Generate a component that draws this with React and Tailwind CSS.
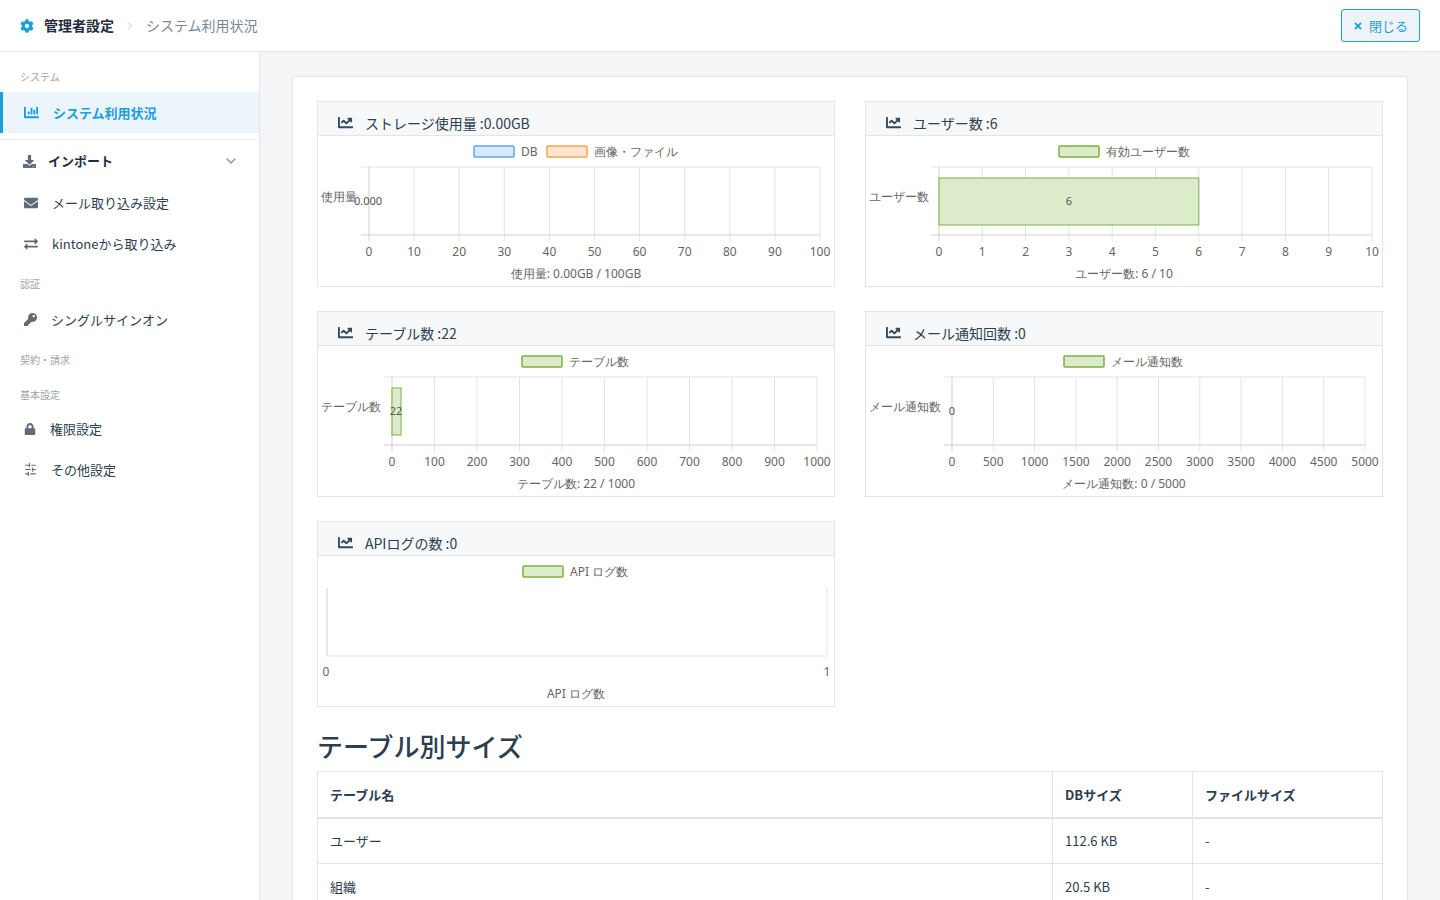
import React from 'react'
import { FaCog, FaChartBar, FaDownload, FaEnvelope, FaExchangeAlt, FaKey, FaLock, FaTimes, FaChartLine } from 'react-icons/fa'
import { FiChevronDown, FiChevronRight, FiSliders } from 'react-icons/fi'

const font = { fontFamily: '"Noto Sans CJK JP", "Noto Sans", sans-serif' }

const Chart = ({ left, right, top = 31, bottom = 99, ticks, legend, ylabel, bar, barLabel, title }) => {
  const n = ticks.length - 1
  const xs = ticks.map((_, i) => left + ((right - left) * i) / n)
  return (
    <svg width="516" height="150" className="block" style={{ fontFamily: '"Noto Sans", sans-serif' }}>
      {legend.map((l) => (
        <g key={l.text}>
          <rect x={l.x} y="10" width="40" height="11" fill={l.fill} stroke={l.stroke} strokeWidth="1.5" rx="1" />
          <text x={l.x + 47} y="20" fontSize="12" fill="#666">{l.text}</text>
        </g>
      ))}
      <line x1={left - 8} y1={top} x2={right} y2={top} stroke="#e3e3e3" />
      <line x1={left - 8} y1={bottom} x2={right} y2={bottom} stroke="#d0d0d0" />
      {xs.map((x, i) => (
        <g key={i}>
          <line x1={x} y1={top} x2={x} y2={bottom + 6} stroke={i === 0 ? '#cfcfcf' : '#e3e3e3'} />
          <text x={x} y="120" fontSize="12" fill="#666" textAnchor="middle">{ticks[i]}</text>
        </g>
      ))}
      {bar && <rect x={left} y={top + 11} width={bar} height={47} fill="#dcebc9" stroke="#7cb342" strokeWidth="1" />}
      {barLabel && <text x={barLabel.x} y={(top + bottom) / 2 + 4} fontSize="11" fill="#555" textAnchor="middle">{barLabel.text}</text>}
      <text x="3" y={(top + bottom) / 2} fontSize="12" fill="#666">{ylabel}</text>
      <text x="258" y="142" fontSize="12" fill="#666" textAnchor="middle">{title}</text>
    </svg>
  )
}

const Panel = ({ heading, children }) => (
  <div className="border border-[#e1e5eb] bg-white h-[186px] overflow-hidden">
    <div className="h-[34px] bg-[#f7f8fa] border-b border-[#e1e5eb] flex items-end pb-[1px] pl-[20px] gap-[12px] text-[14px] text-[#2c3e50]">
      <FaChartLine className="mb-[4px] text-[#34495e]" size={15} />
      <span>{heading}</span>
    </div>
    {children}
  </div>
)

const dec = (n, s) => Array.from({ length: 11 }, (_, i) => String(i * s))

export default function App() {
  const nav = 'flex items-center h-[41px] pl-[24px] gap-[14px] text-[13px] text-[#2c3e50]'
  const sec = 'pl-[20px] text-[10px] text-[#9aa3ad]'
  return (
    <div className="w-[1440px] h-[900px] overflow-hidden bg-white flex flex-col" style={font}>
      <header className="h-[52px] shrink-0 border-b border-[#e1e5eb] flex items-center px-[20px]">
        <FaCog className="text-[#1a9fd9]" size={14} />
        <span className="ml-[10px] text-[14px] font-bold text-[#1f2d3d]">管理者設定</span>
        <FiChevronRight className="mx-[10px] text-[#c0c6cc]" size={12} />
        <span className="text-[14px] text-[#7b8794]">システム利用状況</span>
        <button className="ml-auto h-[33px] px-[11px] flex items-center gap-[6px] border border-[#1a9fd9] rounded-[3px] bg-[#eef3f8] text-[#1a9fd9] text-[13px]">
          <FaTimes size={10} />閉じる
        </button>
      </header>
      <div className="flex flex-1 min-h-0">
        <aside className="w-[260px] shrink-0 border-r border-[#e1e5eb] pt-[17px]">
          <div className={sec}>システム</div>
          <div className="mt-[8px] h-[41px] bg-[#ebf4fb] border-l-[3px] border-[#1a9fd9] flex items-center pl-[21px] gap-[14px] text-[13px] font-bold text-[#1a9fd9]">
            <FaChartBar size={15} />システム利用状況
          </div>
          <div className="border-t border-[#eef0f3] mt-[6px]" />
          <div className="flex items-center h-[42px] pl-[23px] pr-[20px] gap-[12px] text-[13px] font-bold text-[#1f2d3d]">
            <FaDownload className="text-[#5f6b77]" size={13} />インポート
            <FiChevronDown className="ml-auto text-[#8a949e]" size={16} />
          </div>
          <div className={nav}><FaEnvelope className="text-[#5f6b77]" size={14} />メール取り込み設定</div>
          <div className={nav}><FaExchangeAlt className="text-[#5f6b77]" size={14} />kintoneから取り込み</div>
          <div className={sec + ' mt-[12px] mb-[8px]'}>認証</div>
          <div className={nav}><FaKey className="text-[#5f6b77]" size={13} />シングルサインオン</div>
          <div className={sec + ' mt-[12px]'}>契約・請求</div>
          <div className={sec + ' mt-[20px] mb-[6px]'}>基本設定</div>
          <div className={nav}><FaLock className="text-[#5f6b77]" size={12} />権限設定</div>
          <div className={nav}><FiSliders className="text-[#5f6b77] rotate-90" size={13} />その他設定</div>
        </aside>
        <main className="flex-1 bg-[#f3f5f7] pt-[24px] pl-[32px] pr-[32px] overflow-hidden">
          <div className="bg-white border border-[#e1e5eb] rounded-[4px] px-[24px] pt-[24px] h-[900px]">
            <div className="grid grid-cols-2 gap-x-[30px] gap-y-[24px]">
              <Panel heading="ストレージ使用量 :0.00GB">
                <Chart left={51} right={502} ticks={dec(0, 10)} ylabel="使用量"
                  legend={[{ x: 156, text: 'DB', fill: '#d6e9fb', stroke: '#5aa9f0' }, { x: 229, text: '画像・ファイル', fill: '#fde5cf', stroke: '#f5a552' }]}
                  barLabel={{ x: 50, text: '0.000' }} title="使用量: 0.00GB / 100GB" />
              </Panel>
              <Panel heading="ユーザー数 :6">
                <Chart left={73} right={506} ticks={Array.from({ length: 11 }, (_, i) => String(i))} ylabel="ユーザー数"
                  legend={[{ x: 193, text: '有効ユーザー数', fill: '#dcebc9', stroke: '#7cb342' }]}
                  bar={259.8} barLabel={{ x: 203, text: '6' }} title="ユーザー数: 6 / 10" />
              </Panel>
              <Panel heading="テーブル数 :22">
                <Chart left={74} right={499} ticks={dec(0, 100)} ylabel="テーブル数"
                  legend={[{ x: 204, text: 'テーブル数', fill: '#dcebc9', stroke: '#7cb342' }]}
                  bar={9} barLabel={{ x: 78, text: '22' }} title="テーブル数: 22 / 1000" />
              </Panel>
              <Panel heading="メール通知回数 :0">
                <Chart left={86} right={499} ticks={dec(0, 500)} ylabel="メール通知数"
                  legend={[{ x: 198, text: 'メール通知数', fill: '#dcebc9', stroke: '#7cb342' }]}
                  barLabel={{ x: 86, text: '0' }} title="メール通知数: 0 / 5000" />
              </Panel>
              <Panel heading="APIログの数 :0">
                <svg width="516" height="150" className="block" style={{ fontFamily: '"Noto Sans", sans-serif' }}>
                  <rect x="205" y="10" width="40" height="11" fill="#dcebc9" stroke="#7cb342" strokeWidth="1.5" rx="1" />
                  <text x="252" y="20" fontSize="12" fill="#666">API ログ数</text>
                  <line x1="9" y1="32" x2="9" y2="100" stroke="#d0d0d0" />
                  <line x1="509" y1="32" x2="509" y2="100" stroke="#e3e3e3" />
                  <line x1="9" y1="100" x2="509" y2="100" stroke="#e3e3e3" />
                  <text x="8" y="120" fontSize="12" fill="#666" textAnchor="middle">0</text>
                  <text x="509" y="120" fontSize="12" fill="#666" textAnchor="middle">1</text>
                  <text x="258" y="142" fontSize="12" fill="#666" textAnchor="middle">API ログ数</text>
                </svg>
              </Panel>
            </div>
            <h2 className="mt-[22px] text-[26px] text-[#2c3e50] font-medium leading-[34px]">テーブル別サイズ</h2>
            <table className="mt-[8px] w-full border border-[#e1e5eb] text-[13px] text-[#2c3e50]">
              <thead>
                <tr className="h-[46px] border-b-2 border-[#e1e5eb] text-left">
                  <th className="pl-[12px] font-bold">テーブル名</th>
                  <th className="w-[140px] pl-[12px] border-l border-[#e1e5eb] font-bold">DBサイズ</th>
                  <th className="w-[190px] pl-[12px] border-l border-[#e1e5eb] font-bold">ファイルサイズ</th>
                </tr>
              </thead>
              <tbody>
                {[['ユーザー', '112.6 KB'], ['組織', '20.5 KB']].map(([a, b]) => (
                  <tr key={a} className="h-[46px] border-b border-[#e1e5eb]">
                    <td className="pl-[12px]">{a}</td>
                    <td className="pl-[12px] border-l border-[#e1e5eb]">{b}</td>
                    <td className="pl-[12px] border-l border-[#e1e5eb]">-</td>
                  </tr>
                ))}
              </tbody>
            </table>
          </div>
        </main>
      </div>
    </div>
  )
}
